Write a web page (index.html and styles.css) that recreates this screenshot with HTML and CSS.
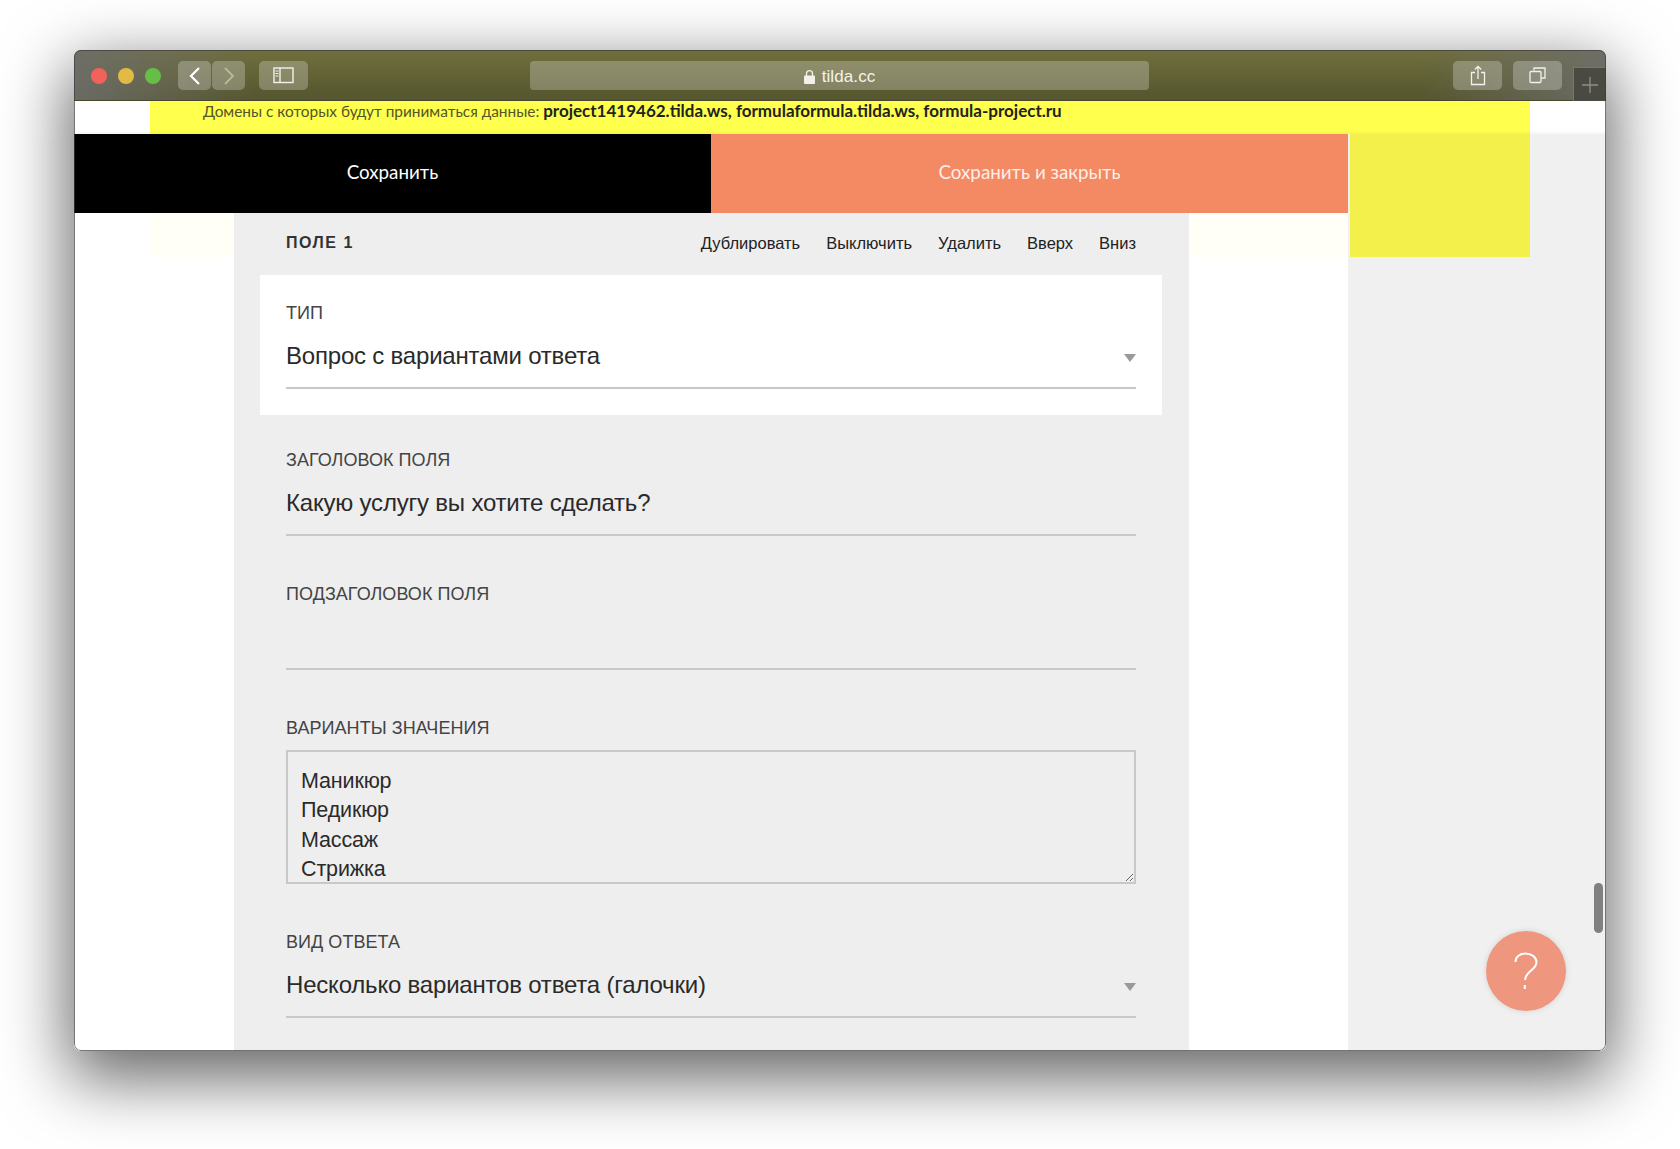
FILE: index.html
```html
<!DOCTYPE html>
<html lang="en">

<head>
    <meta charset="UTF-8" />
    <title>tilda.cc</title>
    <link rel="stylesheet" href="styles.css">
</head>

<body>
    <div class="window">
        <div class="toolbar">
            <div class="lights">
                <span class="light light-red"></span>
                <span class="light light-yellow"></span>
                <span class="light light-green"></span>
            </div>
            <div class="nav-group">
                <span class="tool-btn nav-btn">
                    <svg width="14" height="20" viewBox="0 0 14 20"><path d="M11 2 3 10l8 8" fill="none" stroke="#fff" stroke-width="2.2" /></svg>
                </span>
                <span class="tool-btn nav-btn">
                    <svg width="14" height="20" viewBox="0 0 14 20"><path d="m3 2 8 8-8 8" fill="none" stroke="#b9b99a" stroke-width="1.8" /></svg>
                </span>
            </div>
            <span class="tool-btn sidebar-btn">
                <svg width="22" height="17" viewBox="0 0 22 17">
                    <rect x="1" y="1" width="19" height="14.500" fill="none" stroke="#f2f2ea" stroke-width="1.400" />
                    <path d="M7 1v14.500" fill="none" stroke="#f2f2ea" stroke-width="1.400" />
                    <path d="M2.500 4h3M2.500 6.500h3M2.500 9h3" fill="none" stroke="#f2f2ea" stroke-width="1" />
                </svg>
            </span>
            <div class="url-bar">
                <svg width="11" height="14" viewBox="0 0 11 14">
                    <rect x="0" y="5.500" width="11" height="8.500" rx="1" fill="#f1f1ea" />
                    <path d="M2.500 6V3.700a3 3 0 0 1 6 0V6" fill="none" stroke="#f1f1ea" stroke-width="1.300" />
                </svg>
                <span>tilda.cc</span>
            </div>
            <span class="tool-btn right-btn">
                <svg width="16" height="21" viewBox="0 0 16 21">
                    <path d="M5 7.500H1.500v12h13v-12H11M8 14V1.500M4.800 4.500 8 1.300l3.200 3.200" fill="none" stroke="#f2f2ea" stroke-width="1.300" />
                </svg>
            </span>
            <span class="tool-btn right-btn">
                <svg width="17" height="17" viewBox="0 0 17 17">
                    <path d="M5 3.500V1h11v10h-3.500" fill="none" stroke="#f2f2ea" stroke-width="1.300" />
                    <rect x="1" y="4.500" width="11" height="11" rx="1" fill="none" stroke="#f2f2ea" stroke-width="1.300" />
                </svg>
            </span>
            <span class="new-tab">
                <svg width="16" height="16" viewBox="0 0 16 16"><path d="M8 0v16M0 8h16" stroke="#8f8f86" stroke-width="1.300" /></svg>
            </span>
        </div>

        <div class="page">
            <div class="notice">
                <p>Домены с которых будут приниматься данные: <b>project1419462.tilda.ws, formulaformula.tilda.ws, formula-project.ru</b></p>
                <p class="notice-next">Д</p>
            </div>

            <div class="columns">
                <div class="main">
                    <div class="actions">
                        <div class="action action-save">Сохранить</div>
                        <div class="action action-close">Сохранить и закрыть</div>
                    </div>

                    <div class="editor">
                        <div class="panel">
                            <div class="panel-head">
                                <span class="panel-title">ПОЛЕ 1</span>
                                <div class="panel-links">
                                    <span>Дублировать</span>
                                    <span>Выключить</span>
                                    <span>Удалить</span>
                                    <span>Вверх</span>
                                    <span>Вниз</span>
                                </div>
                            </div>

                            <div class="type-card">
                                <div class="field-label">ТИП</div>
                                <div class="field-input">Вопрос с вариантами ответа<i class="arrow"></i></div>
                            </div>

                            <div class="fields">
                                <div class="field">
                                    <div class="field-label">ЗАГОЛОВОК ПОЛЯ</div>
                                    <div class="field-input">Какую услугу вы хотите сделать?</div>
                                </div>
                                <div class="field">
                                    <div class="field-label">ПОДЗАГОЛОВОК ПОЛЯ</div>
                                    <div class="field-input"></div>
                                </div>
                                <div class="field">
                                    <div class="field-label">ВАРИАНТЫ ЗНАЧЕНИЯ</div>
                                    <textarea class="field-area" spellcheck="false">Маникюр
Педикюр
Массаж
Стрижка
Окрашивание</textarea>
                                </div>
                                <div class="field">
                                    <div class="field-label">ВИД ОТВЕТА</div>
                                    <div class="field-input">Несколько вариантов ответа (галочки)<i class="arrow"></i></div>
                                </div>
                            </div>
                        </div>
                    </div>
                </div>

                <div class="side">
                    <div class="side-block"></div>
                </div>
            </div>

            <div class="scroll-thumb"></div>
            <div class="help-btn">
                <svg width="26" height="38" viewBox="0 0 26 38">
                    <path d="M2.500 10C2.500 4.500 7 1.500 12.500 1.500S23.500 5 23.500 10c0 4.500-3 6.500-6 9-3 2.500-5 5-5.500 9M11.800 33v4" fill="none" stroke="#fff" stroke-width="2" />
                </svg>
            </div>
        </div>
    </div>
</body>

</html>
```

FILE: styles.css
```css
* {
    box-sizing: border-box;
    margin: 0;
    padding: 0;
}

body {
    font-family: "Liberation Sans", sans-serif;
    background-color: #fff;
    height: 1149px;
    padding: 50px 74px 98px;
    overflow: hidden;
    color: #222;
}

.window {
    height: 1001px;
    position: relative;
    display: flex;
    flex-direction: column;
    border-radius: 7px;
    overflow: hidden;
    box-shadow: 0 22px 66px 6px rgba(0, 0, 0, 0.6);
}

/* thin edge of the window, sits over the content */
.window::after {
    content: "";
    position: absolute;
    inset: 0;
    border: 1px solid rgba(60, 60, 60, 0.7);
    border-radius: 7px;
    pointer-events: none;
}

.toolbar {
    height: 51px;
    flex-shrink: 0;
    display: flex;
    align-items: flex-start;
    padding-top: 11px;
    background:
        linear-gradient(to right, rgba(110, 110, 110, 0.85), rgba(110, 110, 110, 0) 12%, rgba(110, 110, 110, 0) 88%, rgba(110, 110, 110, 0.85)),
        linear-gradient(to bottom, #6f6f3d, #55552f);
    border-bottom: 1px solid #47472a;
}

.lights {
    display: flex;
    gap: 11px;
    margin: 7px 0 0 17px;
}

.light {
    width: 16px;
    height: 16px;
    border-radius: 50%;
}

.light-red {
    background-color: #f0625a;
}

.light-yellow {
    background-color: #e2bb46;
}

.light-green {
    background-color: #65bf46;
}

.nav-group {
    display: flex;
    gap: 1px;
    margin-left: 17px;
}

.tool-btn {
    height: 29px;
    display: flex;
    align-items: center;
    justify-content: center;
    border-radius: 5px;
    background-color: rgba(255, 255, 255, 0.25);
}

.nav-btn {
    width: 33px;
}

.sidebar-btn {
    width: 49px;
    margin-left: 14px;
}

.url-bar {
    width: 619px;
    height: 29px;
    margin: 0 304px 0 222px;
    padding-top: 2px;
    display: flex;
    align-items: center;
    justify-content: center;
    gap: 7px;
    border-radius: 4px;
    background-color: rgba(255, 255, 255, 0.25);
    color: #f4f4ee;
    font-size: 17px;
    letter-spacing: 0.1px;
}

.right-btn {
    width: 49px;
    margin-right: 11px;
}

.new-tab {
    width: 33px;
    height: 34px;
    margin-top: 6px;
    display: flex;
    align-items: center;
    justify-content: center;
    background-color: #4a4a42;
    border-left: 1px solid #77776a;
    border-top: 1px solid #77776a;
}

.page {
    flex: 1;
    position: relative;
    display: flex;
    flex-direction: column;
    min-height: 0;
    background-color: #fff;
    overflow: hidden;
}

.notice {
    height: 33px;
    flex-shrink: 0;
    margin: 0 76px;
    padding-left: 53px;
    overflow: hidden;
    background-color: #ffff4d;
    font-family: "Lato", "Liberation Sans", sans-serif;
    font-size: 15.400px;
    line-height: 20px;
    color: #55552a;
}

.notice b {
    font-size: 17px;
    font-weight: 700;
    color: #222;
}

.notice-next {
    margin-top: 8px;
}

.columns {
    flex: 1;
    min-height: 0;
    display: flex;
    box-shadow: 0 -1px 4px rgba(0, 0, 0, 0.06);
}

.main {
    width: 1274px;
    flex-shrink: 0;
    display: flex;
    flex-direction: column;
}

.actions {
    height: 79px;
    flex-shrink: 0;
    display: flex;
}

.action {
    flex: 1;
    padding-bottom: 4px;
    display: flex;
    align-items: center;
    justify-content: center;
    font-family: "Lato", "Liberation Sans", sans-serif;
    font-size: 18.800px;
    color: #fff;
}

.action-save {
    background-color: #000;
}

.action-close {
    background-color: #f38a64;
    color: #fdeee8;
}

.editor {
    flex: 1;
    min-height: 0;
    background: linear-gradient(#fffff8, #fffff8) 76px 0 / 100% 44px no-repeat;
}

.panel {
    width: 955px;
    height: 100%;
    margin-left: 160px;
    padding: 0 27px 0 26px;
    overflow: hidden;
    background-color: #eee;
}

.panel-head {
    height: 62px;
    margin: 0 26px;
    padding-bottom: 2px;
    display: flex;
    align-items: center;
    justify-content: space-between;
}

.panel-title {
    font-size: 16px;
    font-weight: bold;
    letter-spacing: 1.500px;
    color: #333;
}

.panel-links {
    display: flex;
    gap: 26px;
    font-size: 16.500px;
    color: #222;
}

.type-card {
    height: 140px;
    margin-bottom: 34px;
    padding: 27px 26px 0;
    background-color: #fff;
}

.fields {
    margin: 0 26px;
    display: flex;
    flex-direction: column;
    gap: 47px;
}

.field-label {
    height: 20px;
    padding-top: 1px;
    font-size: 18px;
    line-height: 20px;
    letter-spacing: 0.05px;
    color: #444;
}

.field-input {
    height: 67px;
    padding-top: 3px;
    display: flex;
    align-items: center;
    justify-content: space-between;
    border-bottom: 2px solid #c8c8c8;
    font-size: 24px;
    letter-spacing: -0.2px;
    color: #2a2a2a;
}

.arrow {
    width: 0;
    height: 0;
    margin-top: 4px;
    border-left: 6.500px solid transparent;
    border-right: 6.500px solid transparent;
    border-top: 8px solid #999;
}

.field-area {
    display: block;
    width: 100%;
    height: 134px;
    margin-top: 13px;
    padding: 15px 13px 0;
    border: 2px solid #c8c8c8;
    border-radius: 0;
    background-color: #eee;
    font-family: "Liberation Sans", sans-serif;
    font-size: 21.500px;
    line-height: 29.300px;
    letter-spacing: -0.15px;
    color: #2a2a2a;
    overflow: hidden;
    outline: none;
}

.side {
    flex: 1;
    padding-left: 2px;
    background-color: #f0f0f0;
}

.side-block {
    width: 180px;
    height: 123px;
    background-color: #f3f04c;
}

.scroll-thumb {
    position: absolute;
    top: 782px;
    right: 3px;
    width: 9px;
    height: 50px;
    border-radius: 5px;
    background-color: #808080;
}

.help-btn {
    position: absolute;
    right: 40px;
    bottom: 40px;
    width: 80px;
    height: 80px;
    display: flex;
    align-items: center;
    justify-content: center;
    border-radius: 50%;
    background-color: #ef967e;
    box-shadow: 0 0 6px rgba(0, 0, 0, 0.12);
}
```
